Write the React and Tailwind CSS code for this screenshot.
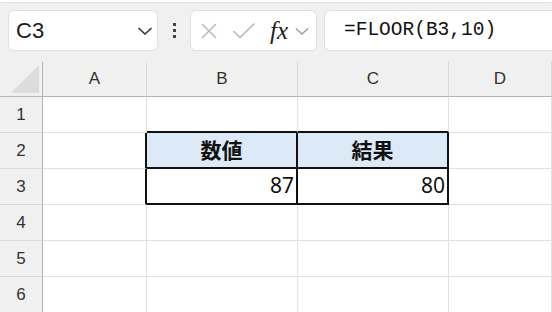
import React from "react";

const cols = ["A", "B", "C", "D"];
const rows = [1, 2, 3, 4, 5, 6];

const Cell = ({ className = "", children }) => (
  <div className={`h-[36px] border-r border-b border-[#e1e1e1] ${className}`}>{children}</div>
);

const App = () => {
  return (
    <div className="w-[552px] h-[312px] overflow-hidden bg-white font-['Noto_Sans',sans-serif]">
      {/* formula bar */}
      <div className="h-[62px] bg-[#f0f0f0] relative">
        <div className="h-[3px] bg-white border-b border-[#e3e3e3] rounded-b-[4px]" />
        <div className="flex items-center pt-[7px] h-[48px]">
          <div className="ml-[8px] w-[150px] h-[41px] bg-white border border-[#e0e0e0] rounded-[6px] flex items-center pl-[7px] pr-[4px]">
            <span className="text-[22px] text-[#1a1a1a] font-['Liberation_Sans',sans-serif] flex-1">C3</span>
            <svg width="16" height="10" viewBox="0 0 16 10">
              <path d="M1.5 2 L8 8 L14.5 2" fill="none" stroke="#333" strokeWidth="1.6" />
            </svg>
          </div>
          <div className="w-[32px] flex flex-col items-center gap-[3px]">
            <div className="w-[3px] h-[3px] bg-[#444]" />
            <div className="w-[3px] h-[3px] bg-[#444]" />
            <div className="w-[3px] h-[3px] bg-[#444]" />
          </div>
          <div className="w-[127px] h-[41px] bg-white border border-[#e0e0e0] rounded-[6px] flex items-center pl-[9px]">
            <svg width="18" height="18" viewBox="0 0 18 18">
              <path d="M2 2 L16 16 M16 2 L2 16" stroke="#b4b4b4" strokeWidth="1.4" />
            </svg>
            <svg width="24" height="18" viewBox="0 0 24 18" className="ml-[14px]">
              <path d="M1.5 9 L8 15.5 L22.5 1.5" fill="none" stroke="#b4b4b4" strokeWidth="1.4" />
            </svg>
            <span className="ml-[14px] text-[25px] italic text-[#222] font-['Liberation_Serif',serif] leading-none">fx</span>
            <svg width="14" height="9" viewBox="0 0 14 9" className="ml-[7px] mt-[2px]">
              <path d="M1 1.5 L7 7 L13 1.5" fill="none" stroke="#999" strokeWidth="1.3" />
            </svg>
          </div>
          <div className="ml-[7px] flex-1 h-[41px] bg-white border border-r-0 border-[#e0e0e0] rounded-l-[6px] flex items-center pl-[19px]">
            <span className="text-[19.5px] text-[#111] font-['Liberation_Mono',monospace]">=FLOOR(B3,10)</span>
          </div>
        </div>
      </div>

      {/* grid */}
      <div className="grid grid-cols-[43px_104px_151px_151px_1fr]">
        <div className="h-[35px] bg-[#f0f0f0] border-r border-b border-[#b4b4b4] flex items-end justify-end pr-[3px] pb-[3px]">
          <svg width="28" height="28" viewBox="0 0 28 28">
            <path d="M28 0 L28 28 L0 28 Z" fill="#dcdcdc" />
          </svg>
        </div>
        {cols.map((c) => (
          <div
            key={c}
            className="h-[35px] bg-[#f0f0f0] border-r border-b border-r-[#dadada] border-b-[#b4b4b4] flex items-center justify-center text-[17px] text-[#333] font-['Liberation_Sans',sans-serif]"
          >
            {c}
          </div>
        ))}

        {rows.map((r) => (
          <React.Fragment key={r}>
            <div className="h-[36px] bg-[#f0f0f0] border-r border-b border-r-[#b4b4b4] border-b-[#dadada] flex items-center justify-center text-[17px] text-[#333] font-['Liberation_Sans',sans-serif]">
              {r}
            </div>
            {r === 1 && (
              <>
                <Cell />
                <Cell className="border-b-2 border-b-[#111]" />
                <Cell className="border-b-2 border-b-[#111]" />
                <Cell />
              </>
            )}
            {r === 2 && (
              <>
                <Cell className="border-r-2 border-r-[#111]" />
                <div className="h-[36px] bg-[#dce9f6] border-r-2 border-b-2 border-[#111] flex items-center justify-center text-[21px] font-bold text-[#111] font-['Noto_Sans_CJK_JP',sans-serif]">
                  数値
                </div>
                <div className="h-[36px] bg-[#dce9f6] border-r-2 border-b-2 border-[#111] flex items-center justify-center text-[21px] font-bold text-[#111] font-['Noto_Sans_CJK_JP',sans-serif]">
                  結果
                </div>
                <Cell />
              </>
            )}
            {r === 3 && (
              <>
                <Cell className="border-r-2 border-r-[#111]" />
                <div className="h-[36px] border-r-2 border-b-2 border-[#111] flex items-center justify-end pr-[2px] text-[21px] text-[#111]">
                  87
                </div>
                <div className="h-[36px] border-r-2 border-b-2 border-[#111] flex items-center justify-end pr-[2px] text-[21px] text-[#111]">
                  80
                </div>
                <Cell />
              </>
            )}
            {r > 3 && (
              <>
                <Cell />
                <Cell />
                <Cell />
                <Cell />
              </>
            )}
          </React.Fragment>
        ))}
      </div>
    </div>
  );
};

export default App;
